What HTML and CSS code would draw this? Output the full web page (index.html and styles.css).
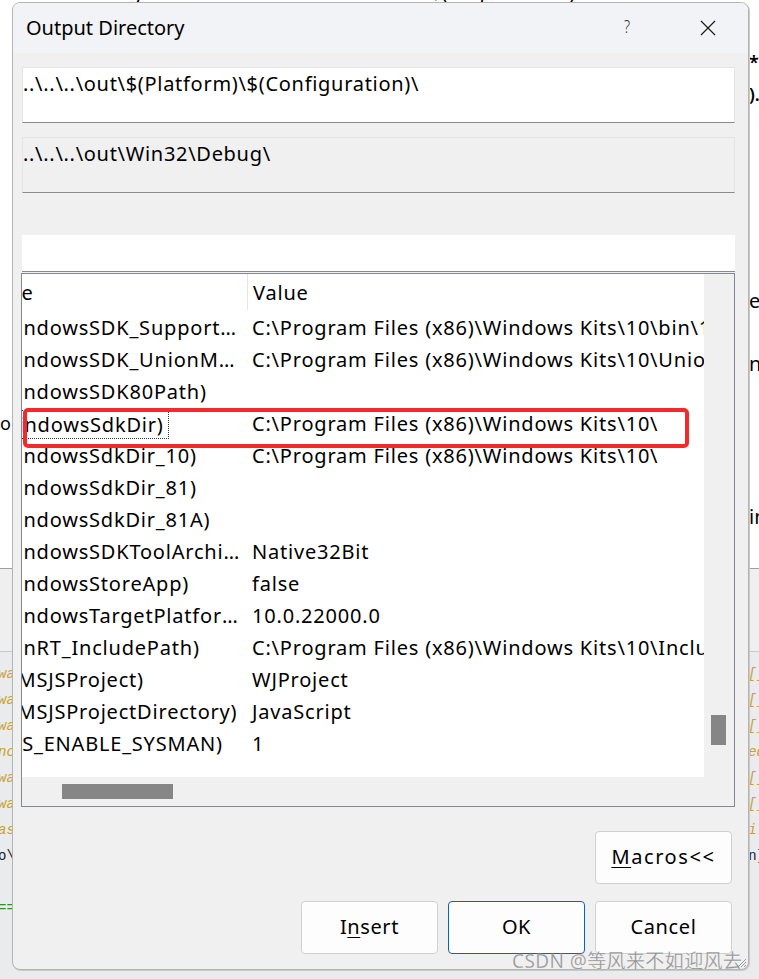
FILE: index.html
```html
<!DOCTYPE html>
<html>
<head>
<meta charset="utf-8">
<link rel="stylesheet" href="styles.css">
</head>
<body>
<div class="desk">
  <div class="desk-top">
    <div class="cut-row"><span class="cut-a">Target Name</span><span class="cut-b">$(ProjectName)</span></div>
    <div class="frag f1"><span class="rt small">*.</span></div>
    <div class="frag f2"><span class="rt small">).</span></div>
    <div class="frag f3"><span class="rt">e</span></div>
    <div class="frag f4"><span class="rt">n</span></div>
    <div class="frag f4b"><span class="lt">o</span></div>
    <div class="frag f5"><span class="rt">in</span></div>
  </div>
  <div class="desk-mid"></div>
  <div class="desk-code">
    <div class="cl"><span>wa</span><span>[]</span></div>
    <div class="cl"><span>wa</span><span>[]</span></div>
    <div class="cl"><span>wa</span><span>[]</span></div>
    <div class="cl"><span>nc</span><span>ed</span></div>
    <div class="cl"><span>wa</span><span>[]</span></div>
    <div class="cl"><span>wa</span><span>[]</span></div>
    <div class="cl"><span>as</span><span>i:</span></div>
    <div class="cl dark"><span>o\</span><span>n]</span></div>
    <div class="cl"><span></span><span></span></div>
    <div class="cl green"><span>==</span><span></span></div>
  </div>
</div>

<div class="dialog">
  <div class="titlebar">
    <span class="title">Output Directory</span>
    <span class="help">?</span>
    <svg class="close" width="16" height="16" viewBox="0 0 16 16"><path d="M1 1 L15 15 M15 1 L1 15" stroke="#1a1a1a" stroke-width="1.2" fill="none"/></svg>
  </div>
  <div class="body">
    <div class="field edit">..\..\..\out\$(Platform)\$(Configuration)\</div>
    <div class="field ro">..\..\..\out\Win32\Debug\</div>
    <div class="filter"></div>
    <div class="list">
      <div class="viewport">
        <div class="table">
          <div class="row head"><div class="c1">Name</div><div class="c2">Value</div></div>
          <div class="row"><div class="c1">$(WindowsSDK_SupportedAPIs_x86)</div><div class="c2">C:\Program Files (x86)\Windows Kits\10\bin\10.0.22000.0\x86</div></div>
          <div class="row"><div class="c1">$(WindowsSDK_UnionMetadataPath)</div><div class="c2">C:\Program Files (x86)\Windows Kits\10\UnionMetadata\10.0.22000.0\</div></div>
          <div class="row"><div class="c1">$(WindowsSDK80Path)</div><div class="c2"></div></div>
          <div class="row sel"><div class="c1"><span class="focus">$(WindowsSdkDir)</span></div><div class="c2">C:\Program Files (x86)\Windows Kits\10\</div></div>
          <div class="row"><div class="c1">$(WindowsSdkDir_10)</div><div class="c2">C:\Program Files (x86)\Windows Kits\10\</div></div>
          <div class="row"><div class="c1">$(WindowsSdkDir_81)</div><div class="c2"></div></div>
          <div class="row"><div class="c1">$(WindowsSdkDir_81A)</div><div class="c2"></div></div>
          <div class="row"><div class="c1">$(WindowsSDKToolArchitecture)</div><div class="c2">Native32Bit</div></div>
          <div class="row"><div class="c1">$(WindowsStoreApp)</div><div class="c2">false</div></div>
          <div class="row"><div class="c1">$(WindowsTargetPlatformVersion)</div><div class="c2">10.0.22000.0</div></div>
          <div class="row"><div class="c1">$(WinRT_IncludePath)</div><div class="c2">C:\Program Files (x86)\Windows Kits\10\Include\10.0.22000.0\winrt</div></div>
          <div class="row"><div class="c1">$(WMSJSProject)</div><div class="c2">WJProject</div></div>
          <div class="row"><div class="c1">$(WMSJSProjectDirectory)</div><div class="c2">JavaScript</div></div>
          <div class="row"><div class="c1">$(ZES_ENABLE_SYSMAN)</div><div class="c2">1</div></div>
        </div>
      </div>
      <div class="vscroll"><div class="vthumb"></div></div>
      <div class="hscroll"><div class="hthumb"></div></div>
      <div class="annot"></div>
    </div>
    <div class="btn-row top">
      <button class="btn"><u>M</u>acros&lt;&lt;</button>
    </div>
    <div class="btn-row">
      <button class="btn">I<u>n</u>sert</button>
      <button class="btn default">OK</button>
      <button class="btn">Cancel</button>
    </div>
  </div>
  <svg class="grip" width="10" height="10" viewBox="0 0 10 10"><path d="M9 1 L1 9 M9 4 L4 9 M9 7 L7 9" stroke="#9a9a9a" stroke-width="1" fill="none"/></svg>
</div>
<div class="watermark">CSDN @等风来不如迎风去</div>
</body>
</html>
```

FILE: styles.css
```css
* { box-sizing: border-box; }
html, body { margin: 0; padding: 0; }
body {
  width: 759px;
  height: 979px;
  overflow: hidden;
  position: relative;
  background: #e8e9eb;
  font-family: "Noto Sans", "Open Sans", sans-serif;
  color: #000;
}

/* ---------- backdrop window (visible only at the edges) ---------- */
.desk {
  position: absolute;
  left: 0; top: 0; right: 0; bottom: 0;
  display: flex;
  flex-direction: column;
}
.desk-top {
  height: 569px;
  background: #fff;
  border-bottom: 1px solid #a0a0a0;
  display: flex;
  flex-direction: column;
  font-size: 20px;
}
.cut-row {
  height: 20px;
  line-height: 20px;
  margin-top: -18px;
  display: flex;
  white-space: nowrap;
}
.cut-a { margin-left: 100px; width: 330px; }
.frag {
  position: relative;
  height: 24px;
  line-height: 24px;
  flex: none;
}
.frag .rt { position: absolute; left: 749px; white-space: nowrap; }
.frag .lt { position: absolute; left: 0; font-size: 18px; }
.small { font-size: 18px; font-weight: 600; }
.f1 { margin-top: 48px; }
.f2 { margin-top: 8px; }
.f3 { margin-top: 183px; }
.f4 { margin-top: 39px; }
.f4b { margin-top: 35px; }
.f5 { margin-top: 70px; }

.desk-mid {
  height: 83px;
  background: #efefef;
  border-bottom: 1px solid #c8c8c8;
}
.desk-code {
  flex: 1;
  background: #eaebed;
  padding-top: 10px;
  font-family: "Liberation Mono", "DejaVu Sans Mono", monospace;
  font-style: italic;
  font-size: 14px;
  color: #c9a227;
}
.cl {
  height: 26px;
  line-height: 25px;
  display: flex;
  justify-content: space-between;
  white-space: nowrap;
}
.cl span:first-child { margin-left: -2px; }
.cl span:last-child { margin-right: -6px; }
.cl.dark { color: #222; font-style: normal; }
.cl.green { color: #3a8a3a; font-style: normal; }

/* ---------- dialog ---------- */
.dialog {
  position: absolute;
  left: 12px;
  top: 2px;
  width: 737px;
  height: 968px;
  background: #f0f0f0;
  border: 1px solid #b4b4b4;
  border-radius: 8px;
  box-shadow: 1px 1px 0 #c9c9c9;
  overflow: hidden;
  display: flex;
  flex-direction: column;
}
.titlebar {
  height: 50px;
  flex: none;
  background: #f2f3f6;
  display: flex;
  align-items: center;
  font-size: 20px;
}
.title { margin-left: 13px; flex: 1; padding-bottom: 2px; }
.help { font-size: 19px; font-weight: 300; color: #333; margin-right: 69px; padding-bottom: 4px; transform: scaleX(0.75); }
.close { margin-right: 32px; }

.body {
  flex: 1;
  padding: 14px 13px 0 8px;
  display: flex;
  flex-direction: column;
}
.field {
  height: 56px;
  font-size: 20px;
  letter-spacing: 0.7px;
  line-height: 24px;
  padding: 4px 0 0 0;
  white-space: nowrap;
  overflow: hidden;
  border: 1px solid #e4e4e4;
  border-bottom: 1px solid #8a8a8a;
}
.field.edit { background: #fff; margin-left: 1px; }
.field.ro { background: #f0f0f0; margin: 14px 0 0 1px; }
.filter {
  height: 37px;
  margin: 42px 0 0 1px;
  background: #fff;
  border-bottom: 1px solid #8a8a8a;
}

.list {
  margin-top: 1px;
  height: 534px;
  border: 1px solid #828790;
  display: grid;
  grid-template-columns: 1fr 30px;
  grid-template-rows: 1fr 29px;
  position: relative;
  background: #fff;
}
.viewport {
  overflow: hidden;
  background: #fff;
  position: relative;
}
.table {
  margin-left: -49px;
  font-size: 20px;
  letter-spacing: 0.8px;
  white-space: nowrap;
}
.row {
  display: flex;
  height: 32px;
  line-height: 32px;
}
.row.head { height: 38px; line-height: 38px; }
.c1 {
  width: 274px;
  flex: none;
  padding-left: 6px;
  padding-right: 4px;
  overflow: hidden;
  text-overflow: ellipsis;
  white-space: nowrap;
}
.head .c1 { padding-left: 1px; }
.head .c2 { border-left: 1px solid #e5e5e5; height: 36px; padding-left: 5px; }
.c2 { padding-left: 5px; white-space: nowrap; }
.focus {
  display: inline-block;
  height: 29px;
  line-height: 27px;
  vertical-align: top;
  margin-top: 2px;
  margin-left: -6px;
  padding: 0 4px 0 6px;
  border: 1px dotted #333;
}

.vscroll {
  grid-column: 2;
  grid-row: 1 / 3;
  background: #f0f0f0;
  position: relative;
}
.vthumb {
  position: absolute;
  left: 7px;
  top: 441px;
  width: 15px;
  height: 30px;
  background: #868686;
}
.hscroll {
  grid-column: 1;
  grid-row: 2;
  background: #f0f0f0;
  position: relative;
}
.hthumb {
  position: absolute;
  left: 40px;
  top: 7px;
  width: 111px;
  height: 15px;
  background: #868686;
}

.annot {
  position: absolute;
  left: 1px;
  top: 134px;
  width: 666px;
  height: 40px;
  border: 4px solid #f42a2a;
  border-radius: 5px;
  pointer-events: none;
}

.btn-row {
  display: flex;
  justify-content: flex-end;
  gap: 10px;
  padding-right: 3px;
  margin-top: 17px;
}
.btn-row.top { margin-top: 24px; }
.btn {
  width: 137px;
  height: 53px;
  background: #fdfdfd;
  border: 1px solid #d0d0d0;
  border-radius: 4px;
  font-family: "Noto Sans", "Open Sans", sans-serif;
  font-size: 20px;
  letter-spacing: 0.6px;
  color: #000;
  padding: 0 0 2px 0;
}
.btn u { text-underline-offset: 3px; text-decoration-thickness: 1px; }
.btn.default { border: 1px solid #0067c0; }
.btn-row.top .btn { letter-spacing: 1.6px; }

.grip {
  position: absolute;
  right: 1px;
  bottom: 1px;
}

.watermark {
  position: absolute;
  left: 512px;
  top: 946px;
  font-family: "Noto Sans", "Noto Sans CJK SC", sans-serif;
  font-size: 19px;
  letter-spacing: 0.4px;
  color: rgba(120,120,120,0.75);
  -webkit-text-stroke: 0.3px rgba(255,255,255,0.6);
  white-space: nowrap;
}
```
